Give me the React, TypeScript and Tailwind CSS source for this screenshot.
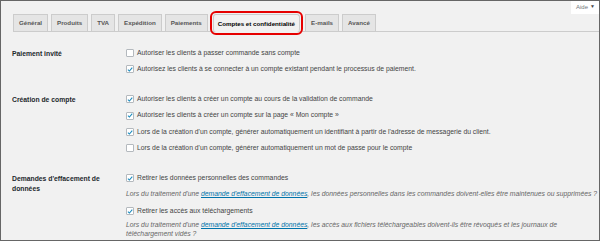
import React from "react";

const Check = ({ checked }: { checked: boolean }) => (
  <span className="w-[8px] h-[8px] shrink-0 bg-white border border-[#b4b9be] rounded-[1px] flex items-center justify-center">
    {checked && (
      <svg width="7" height="7" viewBox="0 0 10 10">
        <path d="M1.5 5.2 L4 7.6 L8.8 1.8" stroke="#1e8cbe" strokeWidth="1.8" fill="none" />
      </svg>
    )}
  </span>
);

const Row = ({ checked, children, h = "h-[16px]" }: { checked: boolean; children: React.ReactNode; h?: string }) => (
  <div className={`flex items-center gap-[3px] ${h}`}>
    <Check checked={checked} />
    <span className="text-[#444] whitespace-nowrap">{children}</span>
  </div>
);

const tabs = ["Général", "Produits", "TVA", "Expédition", "Paiements", "Comptes et confidentialité", "E-mails", "Avancé"];

export default function App() {
  return (
    <div
      className="w-[600px] h-[241px] border border-[#666] bg-[#f1f1f1] overflow-hidden text-[6.8px] text-[#444]"
      style={{ fontFamily: '"Liberation Sans", Arial, sans-serif' }}
    >
      <div className="flex justify-end h-[14px] -mt-[1px]">
        <div className="w-[28px] h-[14px] bg-white flex items-center pl-[5px] gap-[2px] text-[#72777c] text-[6px]">
          <span>Aide</span>
          <span className="text-[5px] text-[#444]">▼</span>
        </div>
      </div>
      <div className="flex items-end gap-[3px] ml-[12px] h-[18px] border-b border-[#ccc] text-[6.2px]">
        {tabs.map((t) => {
          const active = t === "Comptes et confidentialité";
          return active ? (
            <div
              key={t}
              className="h-[18px] -mb-[1px] px-[4px] bg-[#f1f1f1] border border-[#ccc] border-b-0 flex items-center font-bold text-black rounded-[3px] outline-2 outline-offset-1 outline-[#e60000] mx-[2px]"
            >
              {t}
            </div>
          ) : (
            <div
              key={t}
              className="h-[17px] px-[5px] bg-[#e5e5e5] border border-[#ccc] border-b-0 flex items-center font-bold text-[#555]"
            >
              {t}
            </div>
          );
        })}
      </div>

      <div className="ml-[11px] mt-[13px]">
        <div className="flex">
          <div className="w-[114px] font-bold text-[#23282d] pt-[4px]">Paiement invité</div>
          <div>
            <Row checked={false}>Autoriser les clients à passer commande sans compte</Row>
            <Row checked={true}>Autorisez les clients à se connecter à un compte existant pendant le processus de paiement.</Row>
          </div>
        </div>

        <div className="flex mt-[14px]">
          <div className="w-[114px] font-bold text-[#23282d] pt-[4px]">Création de compte</div>
          <div>
            <Row checked={true}>Autoriser les clients à créer un compte au cours de la validation de commande</Row>
            <Row checked={true} h="h-[17px]">Autoriser les clients à créer un compte sur la page « Mon compte »</Row>
            <Row checked={true}>Lors de la création d'un compte, générer automatiquement un identifiant à partir de l'adresse de messagerie du client.</Row>
            <Row checked={false}>Lors de la création d'un compte, générer automatiquement un mot de passe pour le compte</Row>
          </div>
        </div>

        <div className="flex mt-[14px]">
          <div className="w-[114px] font-bold text-[#23282d] pt-[4px] pr-[14px] leading-[10px]">Demandes d'effacement de données</div>
          <div>
            <Row checked={true}>Retirer les données personnelles des commandes</Row>
            <div className="italic text-[#666] h-[17px] flex items-center whitespace-nowrap">
              <span>
                Lors du traitement d'une <a className="text-[#0073aa] underline">demande d'effacement de données</a>, les données personnelles dans les commandes doivent-elles être maintenues ou supprimées ?
              </span>
            </div>
            <Row checked={true}>Retirer les accès aux téléchargements</Row>
            <div className="italic text-[#666] w-[470px] leading-[9px] pt-[1px]">
              Lors du traitement d'une <a className="text-[#0073aa] underline">demande d'effacement de données</a>, les accès aux fichiers téléchargeables doivent-ils être révoqués et les journaux de téléchargement vidés ?
            </div>
          </div>
        </div>
      </div>
    </div>
  );
}
